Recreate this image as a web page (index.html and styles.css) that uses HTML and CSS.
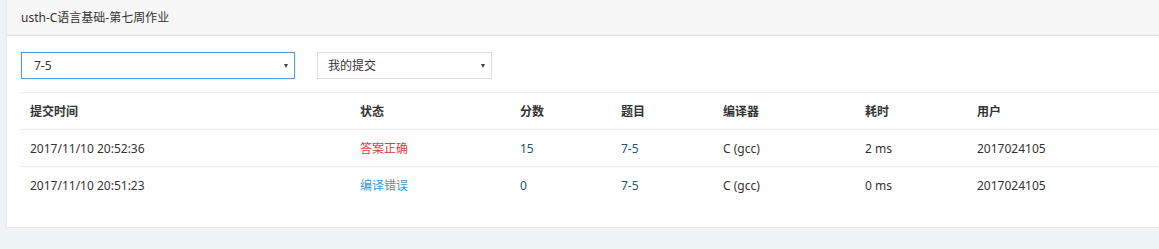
FILE: index.html
```html
<!DOCTYPE html>
<html lang="zh">
<head>
<meta charset="utf-8">
<title>usth-C语言基础-第七周作业</title>
<link rel="stylesheet" href="styles.css">
</head>
<body>
<div class="panel">
  <div class="panel-heading">usth-C语言基础-第七周作业</div>
  <div class="panel-body">
    <div class="filters">
      <div class="select select-problem focused"><span>7-5</span><i class="caret"></i></div>
      <div class="select select-scope"><span>我的提交</span><i class="caret"></i></div>
    </div>
    <table class="subs">
      <colgroup>
        <col class="c1"><col class="c2"><col class="c3"><col class="c4"><col class="c5"><col class="c6"><col class="c7">
      </colgroup>
      <thead>
        <tr><th>提交时间</th><th>状态</th><th>分数</th><th>题目</th><th>编译器</th><th>耗时</th><th>用户</th></tr>
      </thead>
      <tbody>
        <tr><td>2017/11/10 20:52:36</td><td class="ok">答案正确</td><td class="link">15</td><td class="link">7-5</td><td>C (gcc)</td><td>2 ms</td><td>2017024105</td></tr>
        <tr><td>2017/11/10 20:51:23</td><td class="ce">编译错误</td><td class="link">0</td><td class="link">7-5</td><td>C (gcc)</td><td>0 ms</td><td>2017024105</td></tr>
      </tbody>
    </table>
  </div>
</div>
</body>
</html>
```

FILE: styles.css
```css
html, body {
  margin: 0;
  padding: 0;
  background: #eef3f6;
  overflow: hidden;
}
body {
  font-family: "Noto Sans", "Noto Sans CJK SC", sans-serif;
  font-size: 12px;
  color: #333;
}
.panel {
  margin-left: 6px;
  width: 1180px;
  background: #fff;
  box-shadow: 0 1px 2px rgba(0,0,0,0.05);
  border-left: 1px solid #e6ebee;
  border-bottom: 1px solid #e3e8eb;
}
.panel-heading {
  height: 35px;
  line-height: 35px;
  padding: 0 14px;
  background: #f7f7f7;
  border-bottom: 1px solid #e2e2e2;
  font-size: 12px;
  color: #333;
}
.panel-body {
  padding: 16px 0 24px 13px;
}
.filters {
  display: flex;
  gap: 22px;
  padding-left: 1px;
}
.select {
  position: relative;
  box-sizing: border-box;
  height: 27px;
  line-height: 25px;
  border: 1px solid #ddd;
  padding-left: 10px;
  font-size: 12px;
  color: #333;
  background: #fff;
}
.select.focused {
  border-color: #5b9bd5;
  box-shadow: inset 0 1px 1px rgba(0,0,0,0.05), 0 0 2px rgba(102,175,233,0.4);
}
.select-problem { width: 274px; padding-left: 12px; }
.select-scope { width: 175px; }
.caret {
  position: absolute;
  right: 6px;
  top: 11px;
  width: 0;
  height: 0;
  border-left: 2.5px solid transparent;
  border-right: 2.5px solid transparent;
  border-top: 4px solid #444;
}
.subs {
  margin-top: 13px;
  border-collapse: collapse;
  table-layout: fixed;
  width: 1166px;
}
.c1 { width: 330px; }
.c2 { width: 160px; }
.c3 { width: 101px; }
.c4 { width: 102px; }
.c5 { width: 142px; }
.c6 { width: 112px; }
.subs th, .subs td {
  text-align: left;
  padding: 0 10px;
  height: 36px;
  border-top: 1px solid #ececec;
  white-space: nowrap;
}
.subs th {
  font-weight: bold;
  color: #333;
}
.ok { color: #dc3a3f; }
.ce { color: #3a9ad9; }
.link { color: #23527c; }
```
